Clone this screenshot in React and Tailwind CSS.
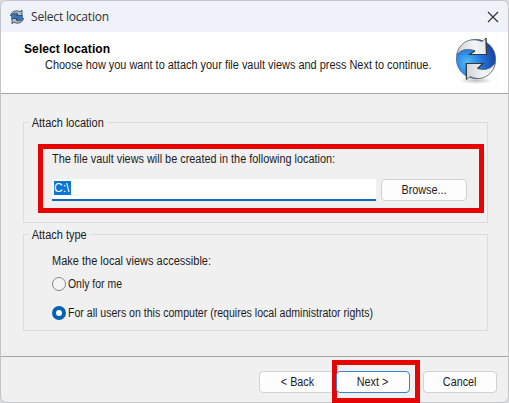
function SyncIcon({ className }) {
  return (
    <svg viewBox="0 0 42 48" className={className} fill="none">
      <defs>
        <radialGradient id="ball" cx="0.28" cy="0.6" r="0.75">
          <stop offset="0" stopColor="#55bdf8" />
          <stop offset="0.5" stopColor="#2277dd" />
          <stop offset="1" stopColor="#1a3f9c" />
        </radialGradient>
        <linearGradient id="arrow" x1="0" y1="0" x2="1" y2="0">
          <stop offset="0" stopColor="#cfd3d8" />
          <stop offset="0.6" stopColor="#f4f4f4" />
          <stop offset="1" stopColor="#e4e6e9" />
        </linearGradient>
        <radialGradient id="shade">
          <stop offset="0" stopColor="#000" stopOpacity="0.25" />
          <stop offset="1" stopColor="#000" stopOpacity="0" />
        </radialGradient>
      </defs>
      <ellipse cx="21" cy="43.5" rx="17" ry="3.5" fill="url(#shade)" />
      <circle cx="21" cy="22" r="19.6" fill="url(#ball)" stroke="#27477f" strokeWidth="0.6" />
      <path d="M1.800 18 C3 8 13 -1 27 4.500 L31 1 L31.500 17.500 L14.500 17.500 L20 13.800 C13 11.500 6 12 1.800 18 Z" fill="url(#arrow)" stroke="#4c5057" strokeWidth="0.7" strokeLinejoin="round" />
      <path d="M40.200 26 C39 37 27 45.500 15.500 39.500 L11.500 42.500 L11.200 26.500 L28 26.500 L22.500 31.500 C29 34 36 32 40.200 26 Z" fill="url(#arrow)" stroke="#4c5057" strokeWidth="0.7" strokeLinejoin="round" />
      <path d="M31 1 L31.500 17.500 H14.500 L20 13.800 M11.500 42.500 L11.200 26.500 H28 L22.500 31.500" stroke="#35383e" strokeWidth="1.200" />
    </svg>
  );
}

function SmallSyncIcon() {
  return (
    <svg viewBox="0 0 16 16" className="h-[16px] w-[16px]" fill="none">
      <circle cx="8" cy="8" r="6" fill="#3974bd" />
      <path d="M1.500 7 C2 2.500 7 0.500 11 2.800 L13 1.200 V6.500 H7.500 L9 4.900 C6 3.500 3 4.500 1.500 7 Z" fill="#b3bfcc" stroke="#2c3a4e" strokeWidth="0.8" />
      <path d="M14.500 9 C14 13.500 9 15.500 5 13.200 L3 14.800 V9.500 H8.500 L7 11.100 C10 12.500 13 11.500 14.500 9 Z" fill="#b3bfcc" stroke="#2c3a4e" strokeWidth="0.8" />
    </svg>
  );
}

function Group({ title, className, children }) {
  return (
    <section className={`relative ml-[22px] w-[465px] border border-[#dcdcdc] ${className}`}>
      <h2 className="absolute -top-[7px] left-[5px] origin-left scale-x-[0.915] bg-[#f0f0f0] px-[3px] leading-[14px]">{title}</h2>
      {children}
    </section>
  );
}

function DialogButton({ className, children }) {
  return (
    <button className={`h-[22px] rounded-[4px] border bg-[#fdfdfd] ${className}`}>
      <span className="inline-block scale-x-90">{children}</span>
    </button>
  );
}

export default function App() {
  return (
    <div className="h-[403px] w-[509px] overflow-hidden bg-[#d9dadd] font-['Liberation_Sans',Arial,sans-serif] text-[12px] leading-[14px] whitespace-nowrap text-[#1c1c1c]">
      <main className="flex h-[403px] w-[509px] flex-col rounded-[7px] border border-[#c3c5c9] bg-[#f0f0f0]">
        <header className="flex h-[31px] shrink-0 items-center rounded-t-[6px] bg-[#eff3f9] pl-[8px]">
          <SmallSyncIcon />
          <span className="ml-[6px] font-['Open_Sans','Noto_Sans',sans-serif] text-[12px] tracking-[-0.19px] text-[#303030]">Select location</span>
          <svg viewBox="0 0 12 12" className="mr-[9px] ml-auto h-[12px] w-[12px]" stroke="#333" strokeWidth="1.200">
            <path d="M1 1 L11 11 M11 1 L1 11" />
          </svg>
        </header>
        <section className="flex h-[62px] shrink-0 border-b border-[#a5a5a5] bg-white">
          <div className="w-[454px] shrink-0 pt-[10px] pl-[23px]">
            <h1 className="leading-[15px] font-bold tracking-[0.1px] text-black">Select location</h1>
            <p className="ml-[21px] origin-left scale-x-[0.911] leading-[17px]">Choose how you want to attach your file vault views and press Next to continue.</p>
          </div>
          <SyncIcon className="mt-[5px] h-[48px] w-[42px] shrink-0" />
        </section>
        <Group title="Attach location" className="mt-[28px] h-[102px]">
          <div className="mt-[21px] ml-[14px] h-[69px] w-[446px] border-[5px] border-[#e60505] pt-[3px] pl-[9px]">
            <p className="origin-left scale-x-[0.907]">The file vault views will be created in the following location:</p>
            <div className="mt-[13px] flex h-[22px]">
              <div className="h-[22px] w-[324px] border-b-2 border-[#1269bd] bg-white pt-[2px] pl-[2px]">
                <span className="block h-[14px] w-[17px] bg-[#0c76d3] leading-[14px] text-white">C:\</span>
              </div>
              <DialogButton className="ml-[5px] w-[86px] border-[#d2d2d2]">Browse...</DialogButton>
            </div>
          </div>
        </Group>
        <Group title="Attach type" className="mt-[11px] h-[97px] pt-[19px] pl-[28px]">
          <p className="origin-left scale-x-[0.917]">Make the local views accessible:</p>
          <div className="mt-[9px] flex items-center">
            <span className="h-[14px] w-[14px] rounded-full border border-[#858585] bg-[#f5f5f5]" />
            <span className="ml-[2px] origin-left scale-x-[0.87]">Only for me</span>
          </div>
          <div className="mt-[15px] flex items-center">
            <span className="h-[14px] w-[14px] rounded-full border-4 border-[#0760b6] bg-white" />
            <span className="ml-[2px] origin-left scale-x-[0.881]">For all users on this computer (requires local administrator rights)</span>
          </div>
        </Group>
        <footer className="mt-[25px] flex h-[46px] shrink-0 items-start border-t border-[#a5a5a5] pl-[258px]">
          <DialogButton className="mt-[14px] w-[78px] shrink-0 border-[#d2d2d2]">&lt; Back</DialogButton>
          <div className="z-10 mt-[3px] -ml-[5px] h-[43px] w-[88px] shrink-0 border-[5px] border-[#e60505] bg-[#f0f0f0] pt-[6px]">
            <DialogButton className="-ml-px w-[74px] border-[#3584cc]">Next &gt;</DialogButton>
          </div>
          <DialogButton className="mt-[14px] ml-[3px] w-[74px] shrink-0 border-[#d2d2d2]">Cancel</DialogButton>
        </footer>
      </main>
    </div>
  );
}
